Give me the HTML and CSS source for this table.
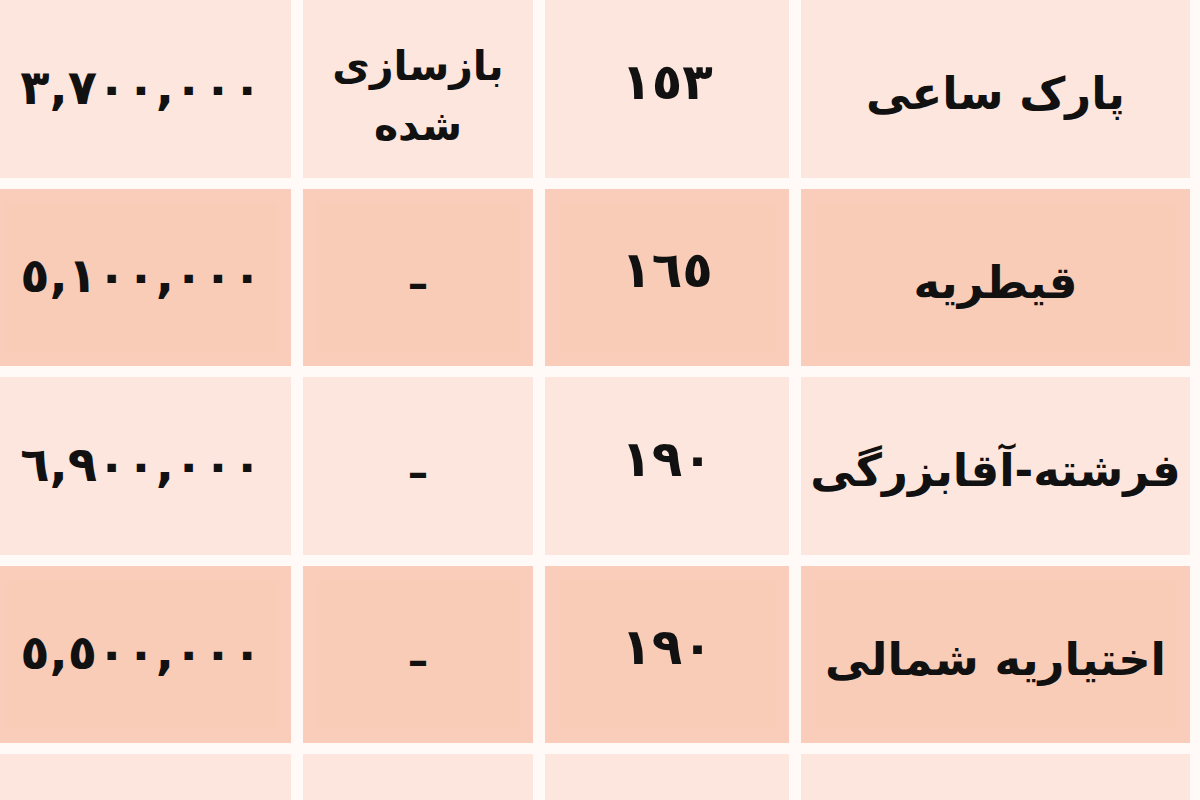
FILE: index.html
```html
<!DOCTYPE html>
<html lang="fa" dir="rtl">
<head>
<meta charset="utf-8">
<title>جدول قیمت</title>
<link rel="stylesheet" href="styles.css">
</head>
<body>
<div class="viewport">
  <div class="table">
    <div class="cell light name">پارک ساعی</div>
    <div class="cell light num">١٥٣</div>
    <div class="cell light status"><span>بازسازی</span><span>شده</span></div>
    <div class="cell light price">٣,٧٠٠,٠٠٠</div>

    <div class="cell dark name">قیطریه</div>
    <div class="cell dark num">١٦٥</div>
    <div class="cell dark status">–</div>
    <div class="cell dark price">٥,١٠٠,٠٠٠</div>

    <div class="cell light name">فرشته-آقابزرگی</div>
    <div class="cell light num">١٩٠</div>
    <div class="cell light status">–</div>
    <div class="cell light price">٦,٩٠٠,٠٠٠</div>

    <div class="cell dark name">اختیاریه شمالی</div>
    <div class="cell dark num">١٩٠</div>
    <div class="cell dark status">–</div>
    <div class="cell dark price">٥,٥٠٠,٠٠٠</div>

    <div class="cell light name"></div>
    <div class="cell light num"></div>
    <div class="cell light status"></div>
    <div class="cell light price"></div>
  </div>
</div>
</body>
</html>
```

FILE: styles.css
```css
html, body {
  margin: 0;
  padding: 0;
  background: #fffaf7;
  overflow: hidden;
}

.viewport {
  width: 1200px;
  height: 800px;
  overflow: hidden;
  direction: rtl;
  background: #fffaf7;
}

.table {
  display: grid;
  direction: rtl;
  grid-template-columns: 389px 244px 230px 300px;
  grid-auto-rows: 177.5px;
  column-gap: 12px;
  row-gap: 11px;
  margin-right: 10px;
  width: 1199px;
  font-family: "DejaVu Sans", sans-serif;
  font-weight: bold;
  color: #111;
}

.cell {
  display: flex;
  flex-direction: column;
  align-items: center;
  justify-content: center;
  text-align: center;
  box-shadow: inset 0 0 0 14px rgba(255, 255, 255, 0.025);
}

.light { background: #fde6dd; }
.dark { background: #f9ccb8; }

.name {
  font-size: 45px;
  padding-top: 10px;
}

.num {
  font-size: 50px;
  padding-bottom: 14px;
}

.status {
  font-size: 41px;
  line-height: 60px;
  padding-top: 14px;
}

.price {
  font-size: 48px;
  padding-bottom: 4px;
  letter-spacing: 4px;
}
```
